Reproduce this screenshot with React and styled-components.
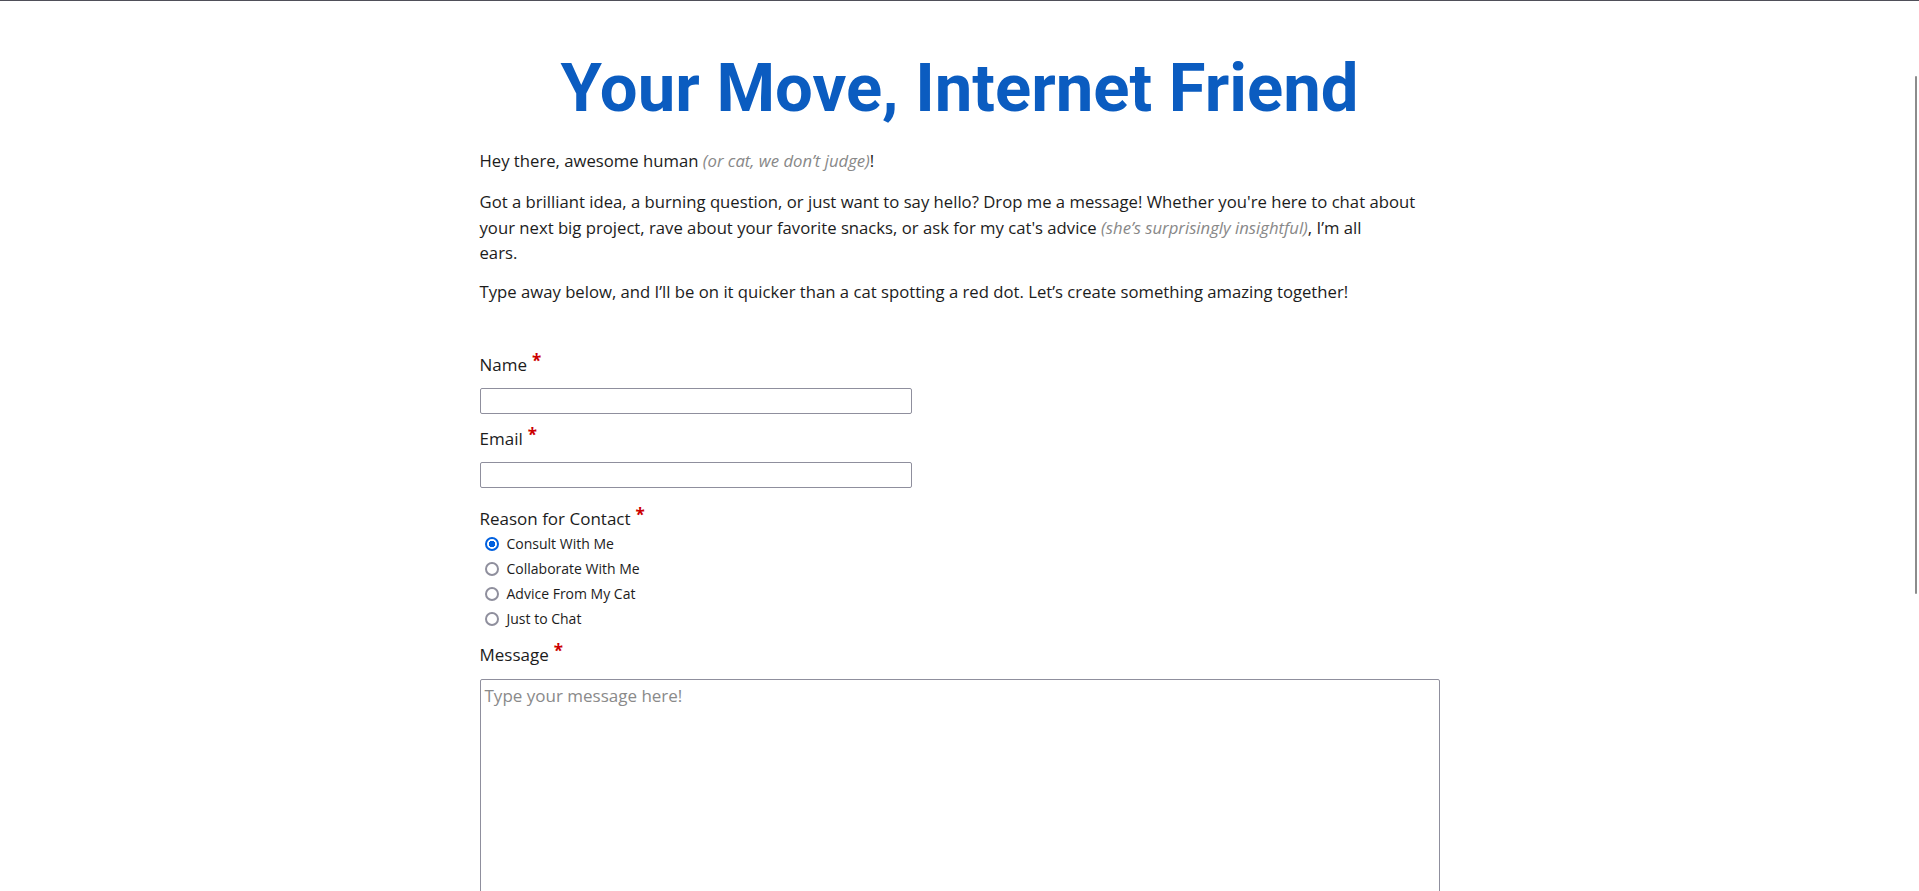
import styled, { createGlobalStyle } from 'styled-components'

const GlobalStyle = createGlobalStyle`
  html, body {
    margin: 0;
    padding: 0;
    background: #ffffff;
  }
  body {
    border-top: 1px solid #4f4f59;
    font-family: "Open Sans", "Noto Sans", sans-serif;
    color: #1c1c1c;
  }
  * {
    box-sizing: border-box;
  }
`

const Page = styled.main`
  width: 960px;
  margin: 0 auto;
  padding: 47px 0 40px;
`

const Title = styled.h1`
  margin: 0 0 20px;
  text-align: center;
  color: #0b5cc0;
  font-family: Roboto, "Liberation Sans", sans-serif;
  font-size: 67px;
  font-weight: 700;
  line-height: 1.2;
`

const Text = styled.p`
  margin: 0 0 ${(p) => p.$gap ?? 15}px;
  font-size: 16.7px;
  line-height: 25.6px;
`

const Aside = styled.em`
  color: #888888;
`

const Form = styled.form`
  display: flex;
  flex-direction: column;
  margin-top: 48px;
`

const Field = styled.div`
  display: flex;
  flex-direction: column;
  margin-bottom: ${(p) => p.$gap || 12}px;
`

const Label = styled.label`
  display: block;
  margin-bottom: ${(p) => p.$gap ?? 10}px;
  font-size: 17px;
  line-height: 25.6px;
`

const Required = styled.span`
  position: relative;
  top: -4px;
  margin-left: 5px;
  color: #cc0000;
  font-weight: 700;
`

const TextInput = styled.input`
  width: 432px;
  height: 26px;
  margin: 0;
  padding: 2px 4px;
  border: 1px solid #8f8f9d;
  border-radius: 2px;
  font-family: inherit;
  font-size: 14px;
`

const RadioList = styled.div`
  display: flex;
  flex-direction: column;
`

const RadioRow = styled.label`
  display: flex;
  align-items: center;
  height: 25px;
  font-size: 14px;
`

const Radio = styled.input`
  appearance: none;
  width: 14px;
  height: 14px;
  margin: 0 8px 0 5px;
  border: 2px solid #8f8f9d;
  border-radius: 50%;
  background: #ffffff;

  &:checked {
    border-color: #0060df;
    background: radial-gradient(circle, #0060df 0 3px, #ffffff 3.5px);
  }
`

const MessageBox = styled.textarea`
  width: 960px;
  height: 320px;
  margin: 0;
  padding: 3px 4px;
  border: 1px solid #8f8f9d;
  border-radius: 2px;
  resize: vertical;
  font-family: inherit;
  font-size: 17px;
  line-height: 25.6px;

  &::placeholder {
    color: #8a8a8a;
  }
`

const ScrollThumb = styled.div`
  position: fixed;
  top: 76px;
  right: 2px;
  width: 2px;
  height: 518px;
  border-radius: 1px;
  background: #8c8c8c;
`

const reasons = ['Consult With Me', 'Collaborate With Me', 'Advice From My Cat', 'Just to Chat']

export default function App() {
  return (
    <>
      <GlobalStyle />
      <Page>
        <Title>Your Move, Internet Friend</Title>
        <Text>
          Hey there, awesome human <Aside>(or cat, we don’t judge)</Aside>!
        </Text>
        <Text $gap={13}>
          Got a brilliant idea, a burning question, or just want to say hello? Drop me a message!
          Whether you're here to chat about your next big project, rave about your favorite snacks,
          or ask for my cat's advice <Aside>(she’s surprisingly insightful)</Aside>, I’m all
          <br />
          ears.
        </Text>
        <Text>
          Type away below, and I’ll be on it quicker than a cat spotting a red dot. Let’s create
          something amazing together!
        </Text>

        <Form onSubmit={(event) => event.preventDefault()}>
          <Field>
            <Label htmlFor="name">
              Name<Required>*</Required>
            </Label>
            <TextInput id="name" type="text" />
          </Field>
          <Field $gap={18}>
            <Label htmlFor="email">
              Email<Required>*</Required>
            </Label>
            <TextInput id="email" type="email" />
          </Field>
          <Field $gap={11}>
            <Label $gap={0}>
              Reason for Contact<Required>*</Required>
            </Label>
            <RadioList>
              {reasons.map((reason, i) => (
                <RadioRow key={reason}>
                  <Radio type="radio" name="reason" defaultChecked={i === 0} />
                  {reason}
                </RadioRow>
              ))}
            </RadioList>
          </Field>
          <Field>
            <Label htmlFor="message" $gap={11}>
              Message<Required>*</Required>
            </Label>
            <MessageBox id="message" placeholder="Type your message here!" />
          </Field>
        </Form>
      </Page>
      <ScrollThumb />
    </>
  )
}
